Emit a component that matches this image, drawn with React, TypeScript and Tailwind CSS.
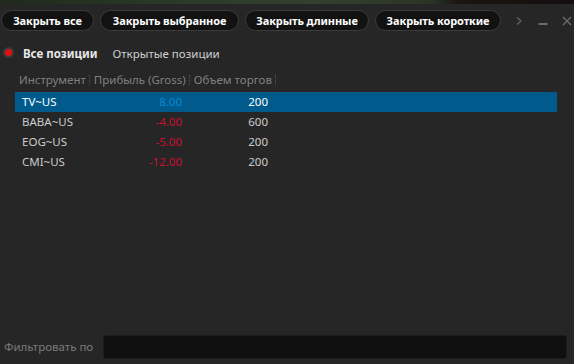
import React from 'react';

const BUTTONS = [
    { label: 'Закрыть все', w: 'w-[93px]' },
    { label: 'Закрыть выбранное', w: 'w-[139px]' },
    { label: 'Закрыть длинные', w: 'w-[124px]' },
    { label: 'Закрыть короткие', w: 'w-[126px]' },
];

const ROWS = [
    { sym: 'TV~US', pnl: '8.00', vol: '200' },
    { sym: 'BABA~US', pnl: '-4.00', vol: '600' },
    { sym: 'EOG~US', pnl: '-5.00', vol: '200' },
    { sym: 'CMI~US', pnl: '-12.00', vol: '200' },
];

function Sep() {
    return <span className="ml-[3px] mr-[4px] h-[10px] border-l border-dotted border-[#555]" />;
}

export default function App() {
    return (
        <div
            className="w-[574px] h-[364px] flex flex-col bg-[#262626] text-[11.5px] text-[#cccccc] overflow-hidden whitespace-nowrap"
            style={{ fontFamily: '"Noto Sans", "Open Sans", sans-serif' }}
        >
            {/* strip of desktop behind the window */}
            <div className="h-[4px] shrink-0 bg-[linear-gradient(90deg,#1f2a1c_0%,#2b3a27_30%,#34402f_55%,#2a3526_75%,#1a1412_80%,#140f0e_100%)]" />

            {/* toolbar */}
            <div className="h-[33px] shrink-0 flex items-center pl-[1px] pr-[2px]">
                <div className="flex items-center gap-[6px]">
                    {BUTTONS.map((b) => (
                        <button
                            key={b.label}
                            className={`${b.w} shrink-0 h-[21px] flex items-center justify-center rounded-full bg-[#121212] border border-[#3c3c3c] text-white font-bold text-[11px] leading-none whitespace-nowrap tracking-[-0.1px]`}
                        >
                            {b.label}
                        </button>
                    ))}
                </div>
                <div className="ml-auto flex items-center gap-[14px]">
                    <svg width="8" height="10" viewBox="0 0 8 10" className="mr-[1px]">
                        <path d="M2 1.5 L6 5 L2 8.5" stroke="#5e5e5e" strokeWidth="1.4" fill="none" />
                    </svg>
                    <svg width="10" height="10" viewBox="0 0 10 10">
                        <path d="M0.5 8 H9.5" stroke="#6a6a6a" strokeWidth="2" />
                    </svg>
                    <svg width="10" height="10" viewBox="0 0 10 10">
                        <path d="M1 1 L9 9 M9 1 L1 9" stroke="#6a6a6a" strokeWidth="1.4" />
                    </svg>
                </div>
            </div>

            {/* tabs */}
            <div className="h-[28px] shrink-0 flex items-center pl-[5px] pt-[5px]">
                <span className="w-[7px] h-[7px] rounded-full bg-[#e01010] ring-[2px] ring-[#3a3a3a] -mt-[3px]" />
                <span className="ml-[11px] font-bold text-[#e8e8e8]">Все позиции</span>
                <span className="ml-[15px] text-[#cfcfcf]">Открытые позиции</span>
            </div>

            {/* table */}
            <div className="pl-[15px] pr-[17px]">
                <div className="h-[27px] flex items-center pl-[4px] text-[#808080] pt-[2px]">
                    <span>Инструмент</span>
                    <Sep />
                    <span>Прибыль (Gross)</span>
                    <Sep />
                    <span>Объем торгов</span>
                    <Sep />
                </div>
                {ROWS.map((r, i) => {
                    const sel = i === 0;
                    return (
                        <div
                            key={r.sym}
                            className={`h-[20px] flex items-center ${sel ? 'bg-[#005a8c] text-white' : ''}`}
                        >
                            <span className="w-[80px] pl-[7px]">{r.sym}</span>
                            <span
                                className={`w-[87px] text-right ${sel ? 'text-[#0a86d6]' : 'text-[#c8102e]'}`}
                            >
                                {r.pnl}
                            </span>
                            <span className="w-[86px] text-right">{r.vol}</span>
                        </div>
                    );
                })}
            </div>

            {/* filter */}
            <div className="mt-auto h-[36px] shrink-0 flex items-center pl-[4px] pr-[7px] pt-[2px]">
                <span className="text-[#7a7a7a] w-[99px]">Фильтровать по</span>
                <div className="flex-1 h-[24px] rounded-[3px] bg-[#0f0f0f] border border-[#1c1c1c]" />
            </div>
        </div>
    );
}
